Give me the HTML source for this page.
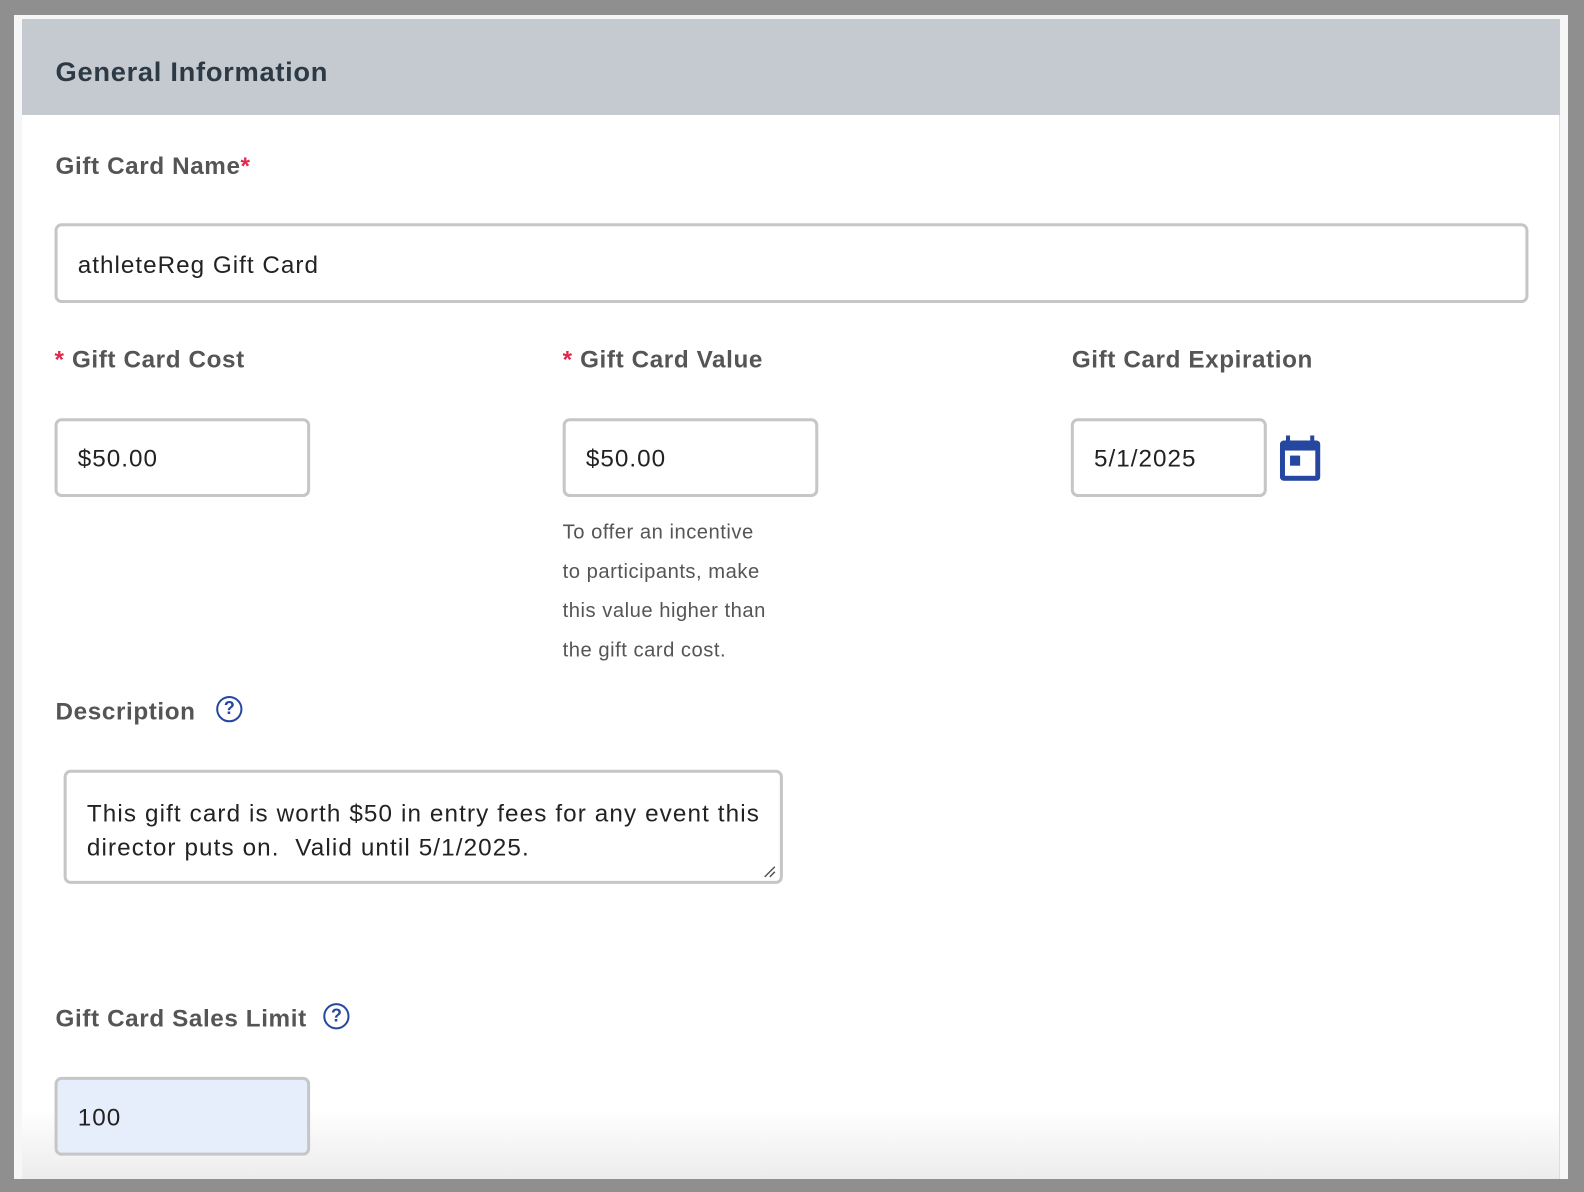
<!DOCTYPE html>
<html><head><meta charset="utf-8"><style>
*{box-sizing:border-box;margin:0;padding:0}
body{width:1584px;height:1192px;background:#8f8f8f;position:relative;overflow:hidden;font-family:"Liberation Sans",sans-serif}
.frame{position:absolute;left:14px;top:15px;width:1554px;height:1164px;background:#f6f6f6}
.panel{position:absolute;left:22px;top:19px;width:1538px;height:1160px;background:#fff;border-right:1px solid #ddd;background-image:linear-gradient(to bottom,#fff 1090px,#ececec 1160px)}
.hdr{position:absolute;left:22px;top:19px;width:1538px;height:96px;background:#c4cacf}
.wrap{position:absolute;left:0;top:0;width:1568px;height:1180px;transform:scale(1.0102);transform-origin:0 0}
.t{position:absolute;white-space:nowrap}
.h{left:55px;top:56px;font-size:27px;font-weight:bold;color:#2d3a45;letter-spacing:0.7px}
.lbl{font-size:24px;font-weight:bold;color:#555;letter-spacing:0.6px}
.req{color:#e0284a}
.in{position:absolute;border:3px solid #c6c6c6;border-radius:7px;background:#fff;font-size:24px;color:#222;padding-left:20px;padding-top:4px;display:flex;align-items:center;letter-spacing:1px}
.help{font-size:20px;color:#555;line-height:39px;letter-spacing:0.5px}
.q{position:absolute;width:26px;height:26px;border:2.5px solid #2547a0;border-radius:50%;color:#2547a0;font-size:18px;font-weight:bold;text-align:center;line-height:21px}
</style></head><body>
<div class="frame"></div>
<div class="panel"></div>
<div class="hdr"></div>
<div class="wrap">
<div class="t h">General Information</div>
<div class="t lbl" style="left:55px;top:151px">Gift Card Name<span class="req">*</span></div>
<div class="in" style="left:54px;top:221px;width:1459px;height:79px">athleteReg Gift Card</div>
<div class="t lbl" style="left:54px;top:343px"><span class="req">*</span> Gift Card Cost</div>
<div class="t lbl" style="left:557px;top:343px"><span class="req">*</span> Gift Card Value</div>
<div class="t lbl" style="left:1061px;top:343px">Gift Card Expiration</div>
<div class="in" style="left:54px;top:414px;width:253px;height:78px">$50.00</div>
<div class="in" style="left:557px;top:414px;width:253px;height:78px">$50.00</div>
<div class="in" style="left:1060px;top:414px;width:194px;height:78px">5/1/2025</div>
<svg style="position:absolute;left:1267px;top:431px" width="40" height="45" viewBox="0 0 40 45">
<rect x="0" y="5" width="40" height="40" rx="4" fill="#2547a0"/>
<rect x="6" y="0" width="4" height="8" fill="#2547a0"/><rect x="30" y="0" width="4" height="8" fill="#2547a0"/>
<rect x="5" y="15" width="30" height="25" fill="#fff"/><rect x="10" y="20" width="10" height="10" fill="#2547a0"/>
</svg>
<div class="t help" style="left:557px;top:508px">To offer an incentive<br>to participants, make<br>this value higher than<br>the gift card cost.</div>
<div class="t lbl" style="left:55px;top:691px">Description</div>
<div class="q" style="left:214px;top:689px">?</div>
<div class="in" style="left:63px;top:762px;width:712px;height:113px;align-items:flex-start;padding-top:24px;line-height:34px;font-size:24px;letter-spacing:1.1px">This gift card is worth $50 in entry fees for any event this director puts on.&nbsp; Valid until 5/1/2025.</div>
<svg style="position:absolute;left:755px;top:856px" width="14" height="14"><path d="M2 12L12 2M7 12L12 7" stroke="#555" stroke-width="1.5"/></svg>
<div class="t lbl" style="left:55px;top:995px">Gift Card Sales Limit</div>
<div class="q" style="left:320px;top:993px">?</div>
<div class="in" style="left:54px;top:1066px;width:253px;height:78px;background:#e7eefb">100</div>
</div>
</body></html>
